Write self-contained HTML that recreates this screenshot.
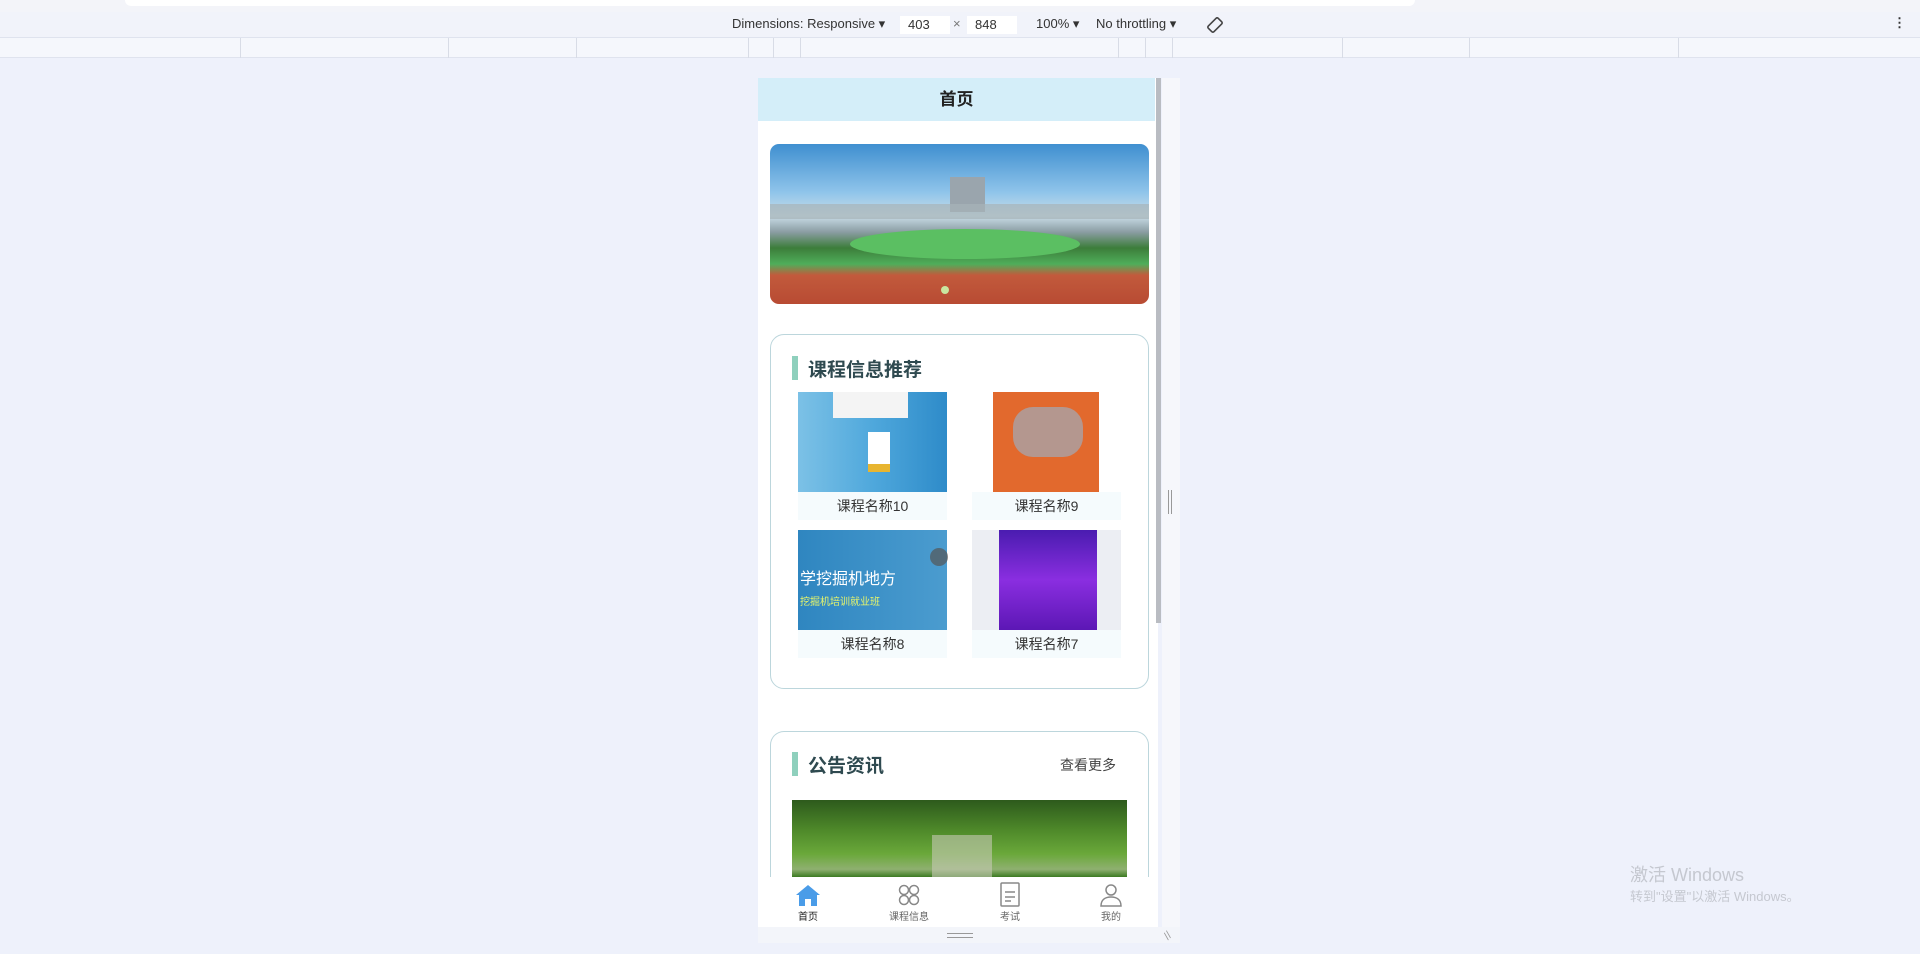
<!DOCTYPE html>
<html><head><meta charset="utf-8"><style>
*{margin:0;padding:0;box-sizing:border-box}
body{width:1920px;height:954px;background:#eef1fb;font-family:"Liberation Sans","Noto Sans CJK SC",sans-serif;position:relative;overflow:hidden;color:#333}
.abs{position:absolute}
.top{left:0;top:0;width:1920px;height:12px;background:#f3f4f9}
.top2{left:125px;top:0;width:1290px;height:6px;background:#fff;border-radius:0 0 6px 6px}
.bar{left:0;top:12px;width:1920px;height:26px;background:#f1f3fa;border-bottom:1px solid #dfe3ee;font-size:13px;color:#333}
.ruler{left:0;top:38px;width:1920px;height:20px;background:#f5f7fc;border-bottom:1px solid #dfe3ee}
.vl{position:absolute;top:0;width:1px;height:20px;background:#d8dce6}
.inp{position:absolute;top:4px;height:18px;background:#fff;padding-left:8px;line-height:18px}
.frame{left:758px;top:78px;width:400px;height:865px;background:#fff}
.hdr{left:758px;top:78px;width:397px;height:43px;background:#d4eef9;text-align:center;line-height:43px;font-size:17px;font-weight:bold;color:#222}
.sb{left:1156px;top:78px;width:5px;height:545px;background:#b9bcc2}
.side{left:1162px;top:78px;width:18px;height:865px;background:#f6f7fb}
.card{border:1px solid #bcd6dc;border-radius:14px;background:#fff}
.tt{font-size:19px;font-weight:bold;color:#2f4a50}
.tb{width:6px;height:24px;background:#8fd0bd}
.lab{height:28px;background:#f5fbfd;text-align:center;line-height:28px;font-size:14px;color:#333}
.tab{top:877px;width:100px;text-align:center;font-size:10px;color:#666}
</style></head><body>
<div class="abs top"></div><div class="abs top2"></div>
<div class="abs bar">
<span class="abs" style="left:732px;top:4px">Dimensions: Responsive ▾</span>
<span class="inp" style="left:900px;width:50px">403</span>
<span class="abs" style="left:953px;top:4px;color:#777">×</span>
<span class="inp" style="left:967px;width:50px">848</span>
<span class="abs" style="left:1036px;top:4px">100% ▾</span>
<span class="abs" style="left:1096px;top:4px">No throttling ▾</span>
<svg class="abs" style="left:1205px;top:3px" width="20" height="20" viewBox="0 0 20 20" fill="none" stroke="#444" stroke-width="1.6"><rect x="6" y="3" width="8" height="14" rx="1.5" transform="rotate(45 10 10)"/></svg>
<span class="abs" style="left:1893px;top:3px;font-weight:bold">⋮</span>
</div>
<div class="abs ruler">
<div class="vl" style="left:240px"></div><div class="vl" style="left:448px"></div><div class="vl" style="left:576px"></div><div class="vl" style="left:748px"></div><div class="vl" style="left:773px"></div><div class="vl" style="left:800px"></div><div class="vl" style="left:1118px"></div><div class="vl" style="left:1145px"></div><div class="vl" style="left:1172px"></div><div class="vl" style="left:1342px"></div><div class="vl" style="left:1469px"></div><div class="vl" style="left:1678px"></div>
</div>
<div class="abs side"></div>
<div class="abs frame"></div>
<div class="abs hdr">首页</div>
<div class="abs sb"></div>
<div class="abs" style="left:1168px;top:490px;width:4px;height:24px;border-left:1px solid #999;border-right:1px solid #999"></div>
<div class="abs" style="left:770px;top:144px;width:379px;height:160px;border-radius:9px;overflow:hidden;background:linear-gradient(180deg,#3f8fd0 0%,#8fc4ea 30%,#c9dde8 45%,#8b9da3 55%,#3c7d3a 65%,#4fae5a 75%,#c25a3c 82%,#b84b33 100%)">
<div class="abs" style="left:80px;top:85px;width:230px;height:30px;background:#5bbf62;border-radius:50%"></div>
<div class="abs" style="left:180px;top:33px;width:35px;height:35px;background:#9aa5ad"></div>
<div class="abs" style="left:0;top:60px;width:379px;height:15px;background:#a6b3b8;opacity:.7"></div>
<div class="abs" style="left:171px;top:142px;width:8px;height:8px;border-radius:50%;background:#c9e6a0"></div>
</div>
<div class="abs card" style="left:770px;top:334px;width:379px;height:355px"></div>
<div class="abs tb" style="left:792px;top:356px"></div>
<div class="abs tt" style="left:808px;top:355px">课程信息推荐</div>
<div class="abs" style="left:798px;top:392px;width:149px;height:100px;background:linear-gradient(90deg,#7cc1e6,#4fa8dc 50%,#2e8bc9)"><div class="abs" style="left:35px;top:0;width:75px;height:26px;background:#f4f4f4"></div><div class="abs" style="left:70px;top:40px;width:22px;height:40px;background:#fff;border-bottom:8px solid #e8b530"></div></div>
<div class="abs lab" style="left:798px;top:492px;width:149px">课程名称10</div>
<div class="abs" style="left:993px;top:392px;width:106px;height:100px;background:#e2692d"><div class="abs" style="left:20px;top:15px;width:70px;height:50px;background:#a9a3a8;border-radius:20px;opacity:.8"></div></div>
<div class="abs lab" style="left:972px;top:492px;width:149px">课程名称9</div>
<div class="abs" style="left:798px;top:530px;width:149px;height:100px;background:linear-gradient(90deg,#2f86c0,#4b9ccf);color:#fff;font-size:16px"><span class="abs" style="left:2px;top:35px">学挖掘机地方</span><span class="abs" style="left:2px;top:63px;font-size:10px;color:#e8f56a">挖掘机培训就业班</span></div>
<div class="abs" style="left:930px;top:548px;width:18px;height:18px;border-radius:50%;background:#555;opacity:.7"></div>
<div class="abs lab" style="left:798px;top:630px;width:149px">课程名称8</div>
<div class="abs" style="left:972px;top:530px;width:149px;height:100px;background:#eceef3"><div class="abs" style="left:27px;top:0;width:98px;height:100px;background:linear-gradient(180deg,#4a1cb0,#8a2ee0 50%,#5c17b5)"></div></div>
<div class="abs lab" style="left:972px;top:630px;width:149px">课程名称7</div>
<div class="abs card" style="left:770px;top:731px;width:379px;height:146px;border-bottom:none;border-radius:14px 14px 0 0"></div>
<div class="abs tb" style="left:792px;top:752px"></div>
<div class="abs tt" style="left:808px;top:751px">公告资讯</div>
<div class="abs" style="left:1060px;top:755px;font-size:14px;color:#444">查看更多</div>
<div class="abs" style="left:792px;top:800px;width:335px;height:77px;background:linear-gradient(180deg,#2d5a1c,#4f8a2a 40%,#6aa83a 70%,#8fb070 90%,#3c7a22);"><div class="abs" style="left:140px;top:35px;width:60px;height:42px;background:#c7c9b6;opacity:.6"></div></div>
<div class="abs" style="left:758px;top:877px;width:397px;height:50px;background:#fff"></div>
<div class="abs tab" style="left:758px"><svg width="26" height="24" viewBox="0 0 26 24" style="margin-top:6px"><path d="M13 2 L25 12 L22 12 L22 23 L16 23 L16 16 L10 16 L10 23 L4 23 L4 12 L1 12Z" fill="#4a9ce8"/></svg><div style="color:#222;margin-top:-2px">首页</div></div>
<div class="abs tab" style="left:859px"><svg width="24" height="24" viewBox="0 0 24 24" fill="none" stroke="#888" stroke-width="1.5" style="margin-top:6px"><circle cx="7" cy="7" r="4.5"/><circle cx="17" cy="7" r="4.5"/><circle cx="7" cy="17" r="4.5"/><circle cx="17" cy="17" r="4.5"/></svg><div style="margin-top:-2px">课程信息</div></div>
<div class="abs tab" style="left:960px"><svg width="22" height="26" viewBox="0 0 22 26" fill="none" stroke="#888" stroke-width="1.5" style="margin-top:5px"><rect x="2" y="1" width="18" height="23" rx="1"/><path d="M6 10h10M6 15h10M6 19h6"/></svg><div style="margin-top:-3px">考试</div></div>
<div class="abs tab" style="left:1061px"><svg width="24" height="24" viewBox="0 0 24 24" fill="none" stroke="#888" stroke-width="1.5" style="margin-top:6px"><circle cx="12" cy="7" r="5"/><path d="M2 23c0-6 4-9 10-9s10 3 10 9z"/></svg><div style="margin-top:-2px">我的</div></div>
<div class="abs" style="left:758px;top:927px;width:422px;height:16px;background:#f3f5fa"></div>
<div class="abs" style="left:947px;top:933px;width:26px;height:5px;border-top:1px solid #999;border-bottom:1px solid #999"></div>
<div class="abs" style="left:1165px;top:930px;font-size:11px;color:#999;transform:rotate(-45deg)">//</div>
<div class="abs" style="left:1630px;top:861px;font-size:18px;color:#c5c8d0">激活 Windows</div>
<div class="abs" style="left:1630px;top:886px;font-size:13px;color:#c5c8d0">转到"设置"以激活 Windows。</div>
</body></html>
